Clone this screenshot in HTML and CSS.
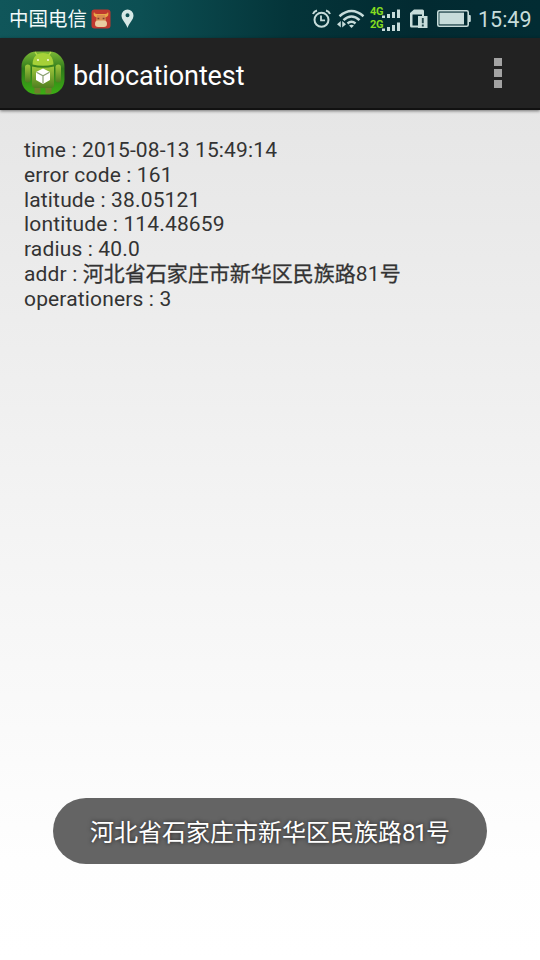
FILE: index.html
```
<!DOCTYPE html>
<html lang="zh">
<head>
<meta charset="utf-8">
<title>bdlocationtest</title>
<link rel="stylesheet" href="styles.css">
</head>
<body>
<div class="screen">
  <header class="status">
    <span class="carrier">中国电信</span>
    <svg class="cow" width="20" height="20" viewBox="0 0 20 20">
      <rect x=".5" y=".5" width="19" height="19" rx="3" fill="#c0392f"/>
      <path d="M3 3Q3.500 5.500 7 5H13Q16.500 5.500 17 3Q18.500 7 14.500 8.500H5.500Q1.500 7 3 3Z" fill="#eaa849"/>
      <path d="M6 6H14L15 12H5Z" fill="#d98b50"/>
      <rect x="4" y="11.500" width="12" height="6.500" rx="3.200" fill="#e9cda0"/>
      <path d="M6.500 9.500H8.300M11.700 9.500H13.500" stroke="#7c3f2c" stroke-width="1.300"/>
    </svg>
    <svg class="pin" width="13" height="20" viewBox="0 0 13 20">
      <path fill-rule="evenodd" d="M6.500.5A6 6 0 0 0 .5 6.500C.5 11 5 14 6.500 19C8 14 12.500 11 12.500 6.500A6 6 0 0 0 6.500.5ZM6.500 4.300A2 2 0 1 1 6.500 8.300A2 2 0 1 1 6.500 4.300Z" fill="#d5e8e6"/>
    </svg>
    <span class="spacer"></span>
    <svg class="alarm" width="19" height="20" viewBox="0 0 19 20" fill="none" stroke="#c7dcda" stroke-width="2">
      <circle cx="9.500" cy="10.800" r="7"/>
      <path d="M9 6.500V11.300H13" stroke-width="1.800"/>
      <path d="M1 5Q2 2.300 5 1.500M18 5Q17 2.300 14 1.500"/>
    </svg>
    <svg class="wifi" width="28" height="20" viewBox="0 0 28 20" fill="none" stroke="#c7dcda" stroke-width="2.500">
      <path d="M2.500 7.200Q14.500-3.200 26.500 7.200"/>
      <path d="M6.500 11.200Q14.500 3.800 22.500 11.200"/>
      <path d="M10.500 14.500Q14.500 11 18.500 14.500"/>
      <path d="M14.500 19L12 16.500Q14.500 14.800 17 16.500Z" fill="#c7dcda" stroke="none"/>
      <path d="M3.800 12V18.500L0 15.200ZM5.200 12V18.500L9 15.200Z" fill="#c7dcda" stroke="none"/>
    </svg>
    <span class="net"><b>4G</b><b>2G</b></span>
    <svg class="bars" width="19" height="24" viewBox="0 0 19 24" fill="#c7dcda">
      <path d="M0 8.500H3V11H0ZM5 7H8V11H5ZM10 5H13V11H10ZM15 2.500H18V11H15ZM0 21.500H3V24H0ZM5 20H8V24H5ZM10 18H13V24H10ZM15 15.500H18V24H15Z"/>
    </svg>
    <svg class="sim" width="19" height="20" viewBox="0 0 19 20">
      <path fill-rule="evenodd" d="M0 4L4 .5H12.500Q14 .5 14 2V7H12V5.500H2.500V16.500H8.500V18.500H1.500Q0 18.500 0 17Z" fill="#c7dcda"/>
      <rect x="8" y="7" width="9.500" height="12" fill="#c7dcda"/>
      <path d="M12.800 9V14.200M12.800 15.500V17.500" stroke="#22464b" stroke-width="1.900"/>
    </svg>
    <svg class="battery" width="34" height="17" viewBox="0 0 34 17">
      <rect x=".8" y=".8" width="30.400" height="15.400" rx="1.500" fill="none" stroke="#c7dcda" stroke-width="1.600"/>
      <rect x="2.400" y="2.600" width="24.600" height="11.800" fill="#c7dcda"/>
      <rect x="31" y="5" width="2.800" height="7" rx="1" fill="#c7dcda"/>
    </svg>
    <span class="clock">15:49</span>
  </header>

  <div class="actionbar">
    <svg class="logo" width="44" height="44" viewBox="0 0 44 44">
      <defs>
        <linearGradient id="bg" x1="0" y1="0" x2="0" y2="1"><stop offset="0" stop-color="#7cb836"/><stop offset=".4" stop-color="#2e7a1a"/><stop offset="1" stop-color="#3cae14"/></linearGradient>
        <linearGradient id="bot" x1="0" y1="0" x2="0" y2="1"><stop offset="0" stop-color="#9fc83c"/><stop offset="1" stop-color="#4f7f20"/></linearGradient>
      </defs>
      <rect x=".5" y=".5" width="43" height="43" rx="15" fill="url(#bg)"/>
      <path d="M14 1L16.500 4.500M30 1L27.500 4.500" stroke="#b4d84c" stroke-width="1.300"/>
      <path d="M11.500 13.500Q12 2 22 2Q32 2 32.500 13.500Q22 16 11.500 13.500Z" fill="#a6d138"/>
      <circle cx="17" cy="9" r="1.100" fill="#f2f8d8"/><circle cx="27" cy="9" r="1.100" fill="#f2f8d8"/>
      <rect x="4" y="13.500" width="5.500" height="18" rx="2.700" fill="url(#bot)"/>
      <rect x="34.500" y="13.500" width="5.500" height="18" rx="2.700" fill="url(#bot)"/>
      <path d="M11 15.500Q22 18 33 15.500V34Q33 37 30 37H14Q11 37 11 34Z" fill="url(#bot)"/>
      <path d="M13.500 37H19.500V42.500H13.500ZM24.500 37H30.500V42.500H24.500Z" fill="#6e7f2c"/>
      <path d="M22 17.500L29 21V29L22 33L15 29V21Z" fill="#fff"/>
      <path d="M15.500 21.300L22 24.700L28.500 21.300M22 24.700V32.500" fill="none" stroke="#8aa072" stroke-width="1.200"/>
    </svg>
    <h1 class="title">bdlocationtest</h1>
    <div class="menu"><i></i><i></i><i></i></div>
  </div>

  <main class="content">
    <p>time : 2015-08-13 15:49:14</p>
    <p>error code : 161</p>
    <p>latitude : 38.05121</p>
    <p>lontitude : 114.48659</p>
    <p>radius : 40.0</p>
    <p>addr : <span class="cjk">河北省石家庄市新华区民族路</span>81<span class="cjk">号</span></p>
    <p>operationers : 3</p>
  </main>

  <div class="toast">河北省石家庄市新华区民族路<span class="num">81</span>号</div>
</div>
</body>
</html>
```
FILE: styles.css
```
* { box-sizing: border-box; }
body { margin: 0; }
.screen {
  width: 540px;
  height: 960px;
  display: flex;
  flex-direction: column;
  align-items: stretch;
  overflow: hidden;
  font-family: Roboto, "Noto Sans CJK SC", sans-serif;
  background: linear-gradient(#e6e6e6 108px, #f3f3f3 500px, #fefefe 860px, #fff);
}
.status {
  height: 38px;
  flex: none;
  display: flex;
  align-items: center;
  padding: 0 9px;
  background: linear-gradient(90deg, #10565a 0, #0c4f53 140px, #043439 290px, #022a31 420px, #022c33 100%);
  color: #c7dcda;
}
.carrier {
  font-size: 19.5px;
  line-height: 38px;
  padding-top: 2px;
  color: #f2fafa;
  width: 81px;
  white-space: nowrap;
}
.cow { margin-left: 1px; }
.pin { margin-left: 10px; }
.spacer { flex: 1; }
.wifi { margin-left: 6px; }
.net {
  width: 15px;
  margin: 0 0 2px 5px;
  display: flex;
  flex-direction: column;
  font-size: 11px;
  letter-spacing: -.4px;
  line-height: 13px;
  color: #84dc20;
}
.net b { height: 13px; }
.bars { margin: 0 0 1px -3px; }
.sim { margin-left: 9px; }
.battery { margin: 0 0 1px 8px; }
.clock {
  margin-left: 7px;
  padding-top: 2px;
  width: 53px;
  font-size: 21.5px;
  line-height: 38px;
}
.actionbar {
  height: 72px;
  flex: none;
  display: flex;
  align-items: center;
  padding: 0 38px 0 21px;
  background: #222;
  border-bottom: 2px solid #111;
  box-shadow: 0 1px 3px rgba(0, 0, 0, .5);
}
.title {
  flex: 1;
  margin: 5px 0 0 8px;
  font-size: 27px;
  letter-spacing: -.1px;
  line-height: 32px;
  font-weight: 400;
  color: #fff;
}
.menu {
  display: flex;
  flex-direction: column;
  gap: 3px;
}
.menu i {
  width: 8px;
  height: 8px;
  background: #a3a3a3;
}
.content {
  flex: none;
  padding: 28px 24px;
  font-size: 21px;
  letter-spacing: .15px;
  line-height: 24.75px;
  color: #333;
}
.content p {
  margin: 0;
  height: 24.75px;
  white-space: nowrap;
}
.cjk {
  letter-spacing: 0;
  -webkit-text-stroke: .3px #333;
}
.toast {
  margin: auto auto 96px;
  width: 434px;
  height: 66px;
  flex: none;
  padding-top: 2px;
  border-radius: 33px;
  background: #646464;
  color: #fff;
  font-size: 24px;
  line-height: 66px;
  text-align: center;
  white-space: nowrap;
  text-shadow: 0 0 4px rgba(0, 0, 0, .7);
}
.num {
  display: inline-block;
  letter-spacing: -1.500px;
}
```
